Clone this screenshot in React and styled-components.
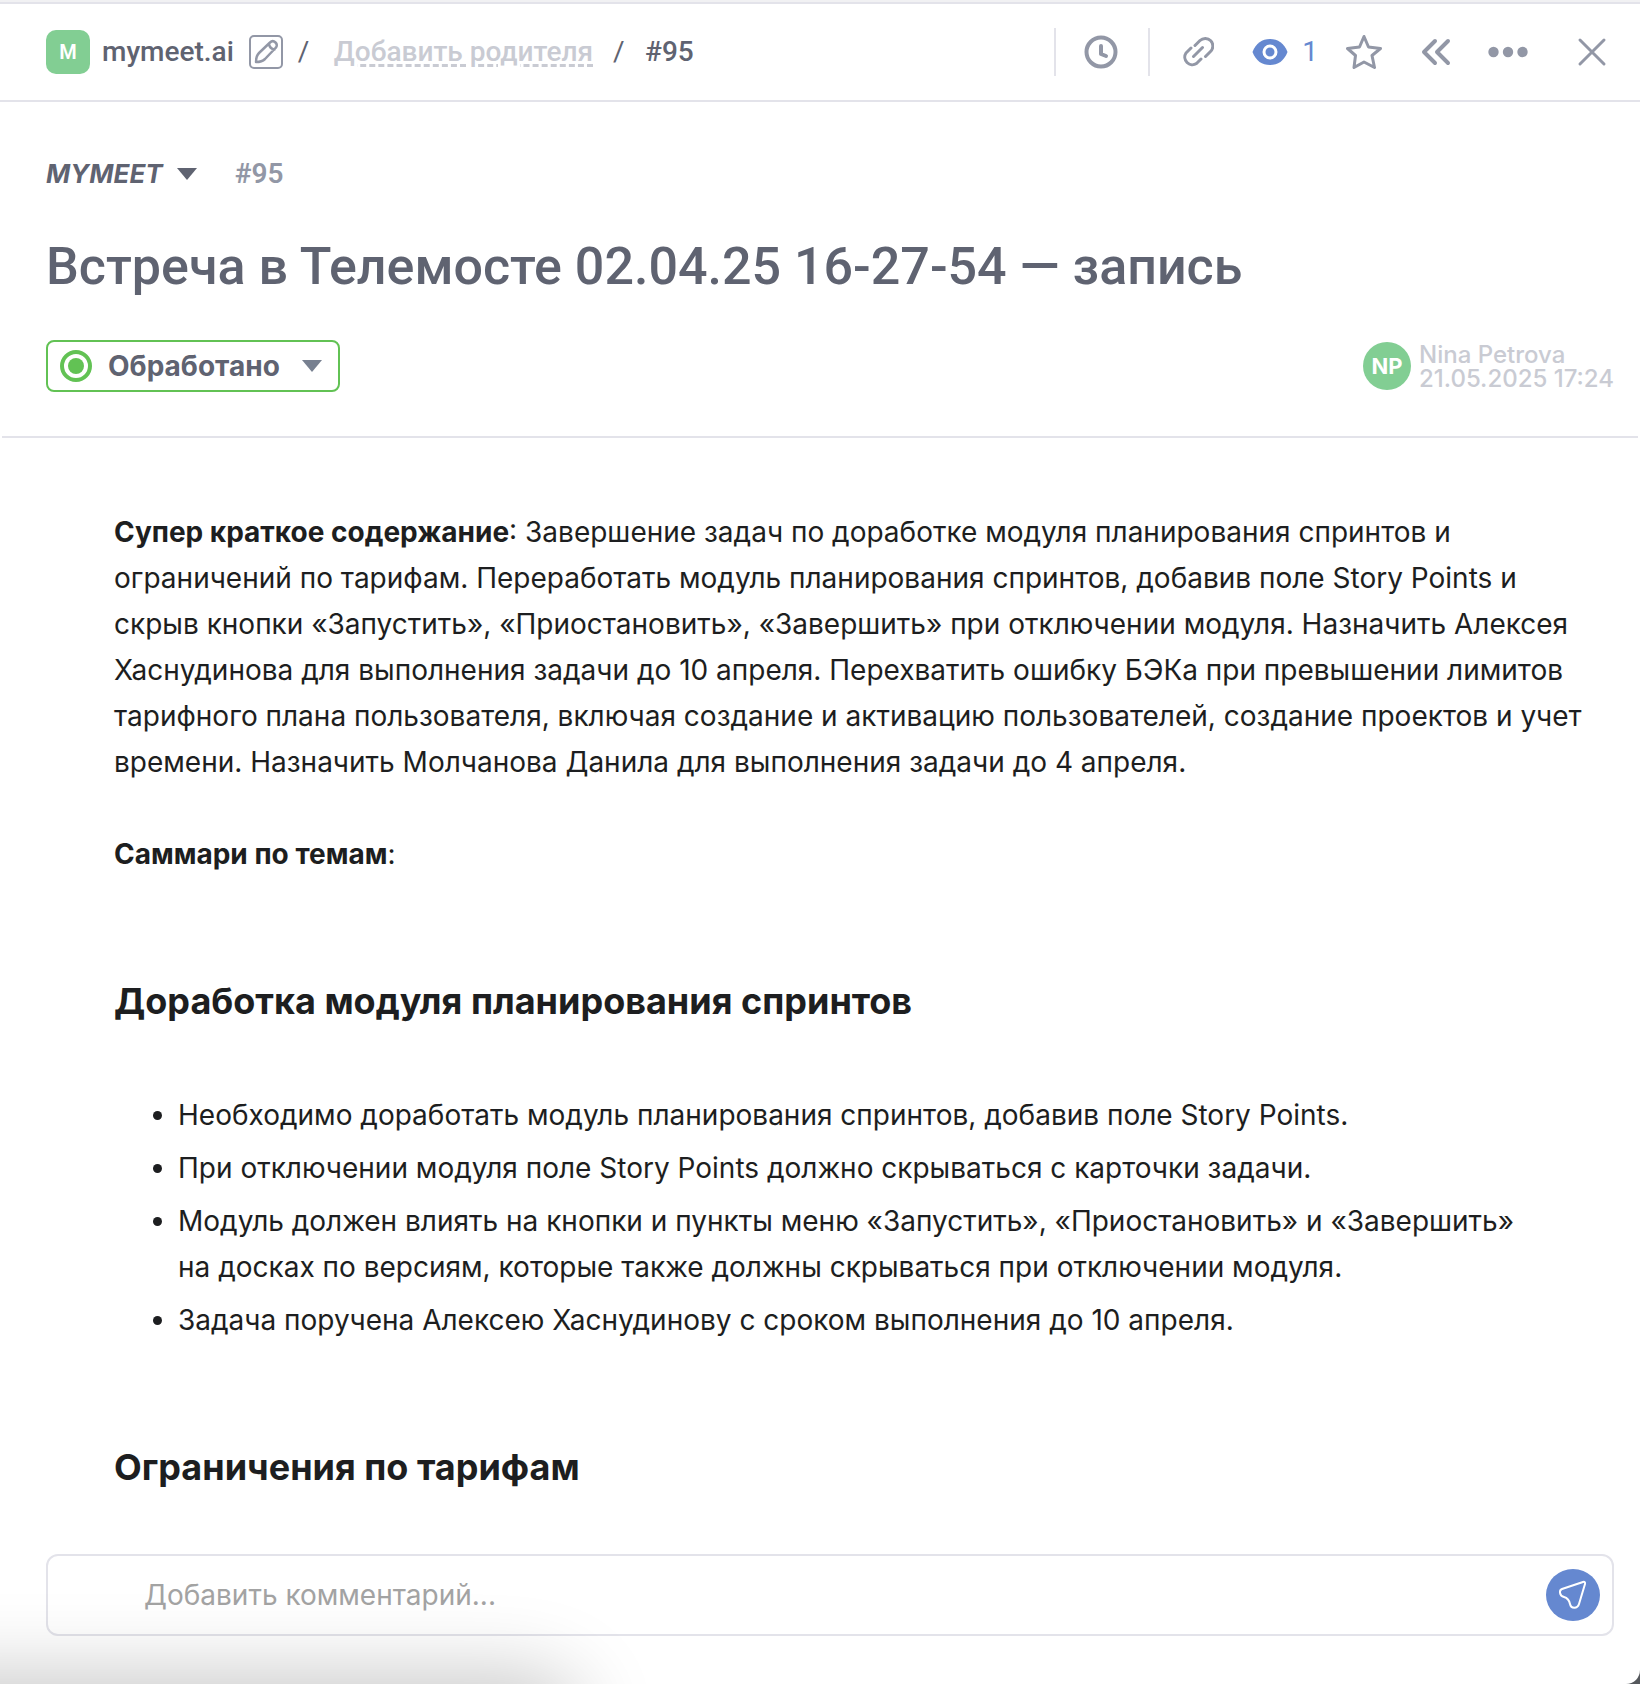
import React from 'react';
import styled, { createGlobalStyle } from 'styled-components';

const color = {
  text: '#1d1e20',
  slate: '#5f6371',
  muted: '#9297a6',
  faint: '#c9cbd3',
  line: '#e3e3ea',
  green: '#82ce93',
  status: '#62c254',
  blue: '#6588d0',
};

const ui = `Roboto, "Liberation Sans", sans-serif`;
const prose = `Inter, "Liberation Sans", sans-serif`;

const GlobalStyle = createGlobalStyle`
  *, *::before, *::after { box-sizing: border-box; }
  body { margin: 0; background: #55585c; color: ${color.text}; font-family: ${prose}; }
  button { margin: 0; padding: 0; border: 0; background: none; font: inherit; color: inherit; cursor: pointer; }
  h1, h2, p, ul { margin: 0; padding: 0; }
`;

const Panel = styled.main`
  position: relative;
  display: flex;
  flex-direction: column;
  height: 100vh;
  overflow: hidden;
  background: #fff;
  border-top: 2px solid #f1f1f3;
  border-bottom-right-radius: 14px;
`;

const Toolbar = styled.header`
  flex: none;
  display: flex;
  align-items: center;
  justify-content: space-between;
  height: 100px;
  padding: 0 32px 0 46px;
  border-top: 2px solid ${color.line};
  border-bottom: 2px solid ${color.line};
  font: 500 28px/36px ${ui};
  color: ${color.slate};
`;

const Crumbs = styled.nav`
  display: flex;
  align-items: center;
`;

const Badge = styled.span`
  display: grid;
  place-items: center;
  flex: none;
  width: ${(p) => p.$size}px;
  height: ${(p) => p.$size}px;
  border-radius: ${(p) => (p.$round ? '50%' : '10px')};
  background: ${color.green};
  color: #fff;
  font: ${(p) => (p.$round ? `700 22px/24px ${prose}` : `600 20px/24px ${ui}`)};
`;

const Project = styled.span`
  margin-left: 12px;
`;

const EditButton = styled.button`
  display: flex;
  margin-left: 15px;
  color: ${color.muted};
`;

const Slash = styled.span`
  width: 12px;
  margin-left: ${(p) => p.$gap}px;
  font-weight: 400;
`;

const ParentLink = styled.a`
  margin-left: 24px;
  color: ${color.faint};
  text-decoration: underline dashed 3px;
  text-underline-offset: 3px;
`;

const TaskRef = styled.span`
  margin-left: 20px;
`;

const Tools = styled.div`
  display: flex;
  align-items: center;
  color: ${color.muted};
`;

const Separator = styled.span`
  width: 2px;
  height: 48px;
  margin-left: ${(p) => p.$gap || 0}px;
  background: ${color.line};
`;

const Tool = styled.button`
  display: flex;
  align-items: center;
  gap: 14px;
  margin-left: ${(p) => p.$gap}px;
  color: ${(p) => (p.$active ? color.blue : 'inherit')};
  font-weight: 400;
`;

const TaskHead = styled.section`
  flex: none;
  margin: 0 2px;
  padding: 52px 24px 44px 44px;
  border-bottom: 2px solid ${color.line};
  color: ${color.slate};
`;

const KeyRow = styled.div`
  display: flex;
  align-items: center;
  height: 40px;
  font: 600 28px/40px ${ui};
`;

const Space = styled.button`
  display: flex;
  align-items: center;
  gap: 14px;
  font: italic 700 26px/40px ${prose};
`;

const Key = styled.span`
  margin-left: 38px;
  color: ${color.muted};
`;

const Title = styled.h1`
  margin-top: 41px;
  font: 500 52px/64px ${ui};
`;

const MetaRow = styled.div`
  display: flex;
  align-items: center;
  justify-content: space-between;
  margin-top: 41px;
`;

const Status = styled.button`
  display: flex;
  align-items: center;
  height: 52px;
  padding: 0 16px 0 12px;
  border: 2px solid ${color.status};
  border-radius: 8px;
  font: 700 28px/36px ${prose};
  svg:last-child { margin-left: 22px; }
`;

const StatusText = styled.span`
  margin-left: 16px;
`;

const Author = styled.div`
  display: flex;
  align-items: center;
  gap: 8px;
  color: ${color.faint};
  font: 500 24px/24px ${prose};
`;

const Stack = styled.div`
  display: flex;
  flex-direction: column;
  padding-top: 2px;
`;

const Body = styled.article`
  flex: 1;
  min-height: 0;
  overflow: hidden;
  padding: 71px 46px 0 114px;
  font: 400 28px/46px ${prose};
`;

const Paragraph = styled.p`
  & + & { margin-top: 46px; }
`;

const Heading = styled.h2`
  margin: 96px 0 63px;
  font: 700 36px/56px ${prose};
`;

const List = styled.ul`
  display: flex;
  flex-direction: column;
  gap: 7px;
  padding-left: 64px;
  padding-right: 48px;
`;

const Composer = styled.form`
  flex: none;
  display: flex;
  align-items: center;
  height: 82px;
  margin: 0 26px 48px 46px;
  padding: 0 12px 0 96px;
  border: 2px solid ${color.line};
  border-radius: 12px;
`;

const CommentInput = styled.input`
  flex: 1;
  min-width: 0;
  padding: 0;
  border: 0;
  outline: 0;
  background: none;
  color: ${color.text};
  font: 400 28px/40px ${prose};
  &::placeholder { color: #a3a3a3; opacity: 1; }
`;

const SendButton = styled.button`
  display: grid;
  place-items: center;
  width: 54px;
  height: 52px;
  border-radius: 50%;
  background: ${color.blue};
  color: #fff;
`;

const CornerShade = styled.div`
  position: absolute;
  left: -100px;
  bottom: -70px;
  width: 660px;
  height: 60px;
  border-radius: 30px;
  box-shadow: 0 0 80px 20px rgba(0, 0, 0, 0.22);
  pointer-events: none;
`;

const Caret = ({ fill = 'currentColor' }) => (
  <svg width="20" height="12" viewBox="0 0 20 12" aria-hidden="true">
    <path d="M0 0h20L10 12z" fill={fill} />
  </svg>
);

const Stroke = ({ w, h, sw = 3, children }) => (
  <svg width={w} height={h} viewBox={`0 0 ${w} ${h}`} fill="none" stroke="currentColor"
    strokeWidth={sw} strokeLinecap="round" strokeLinejoin="round" aria-hidden="true">
    {children}
  </svg>
);

const points = [
  'Необходимо доработать модуль планирования спринтов, добавив поле Story Points.',
  'При отключении модуля поле Story Points должно скрываться с карточки задачи.',
  'Модуль должен влиять на кнопки и пункты меню «Запустить», «Приостановить» и «Завершить» на досках по версиям, которые также должны скрываться при отключении модуля.',
  'Задача поручена Алексею Хаснудинову с сроком выполнения до 10 апреля.',
];

export default function App() {
  return (
    <>
      <GlobalStyle />
      <Panel>
        <Toolbar>
          <Crumbs>
            <Badge $size={44}>M</Badge>
            <Project>mymeet.ai</Project>
            <EditButton aria-label="Изменить проект">
              <Stroke w={34} h={34} sw={2}>
                <rect x="1" y="1" width="32" height="32" rx="4" />
                <path strokeWidth="2.500" d="M7 27c0-4 1-7 3-9L21 7.500c2-2 4-1.500 5.500 0s2 3.500 0 5.500L16 24c-2 2-5 3-9 3zM20 9c.5 3 2.500 5 5.500 5.500" />
              </Stroke>
            </EditButton>
            <Slash $gap={15}>/</Slash>
            <ParentLink href="#parent">Добавить родителя</ParentLink>
            <Slash $gap={20}>/</Slash>
            <TaskRef>#95</TaskRef>
          </Crumbs>
          <Tools>
            <Separator />
            <Tool $gap={28} aria-label="История">
              <Stroke w={34} h={34} sw={4}>
                <circle cx="17" cy="17" r="14.500" />
                <path d="M17 11v8l5 2" />
              </Stroke>
            </Tool>
            <Separator $gap={30} />
            <Tool $gap={32} aria-label="Скопировать ссылку">
              <Stroke w={32} h={32} sw={3}>
                <path d="M13 9.500l5-5a7.600 7.600 0 0 1 10.500 11l-5 5M19 23l-4.500 4.500A7.600 7.600 0 0 1 4 17l5-5M11.500 20.500l9-9" />
              </Stroke>
            </Tool>
            <Tool $gap={38} $active aria-label="Наблюдатели">
              <svg width="36" height="28" viewBox="0 0 36 28" aria-hidden="true">
                <path d="M.5 14C4 5 10 1 18 1s14 4 17.500 13C32 23 26 27 18 27S4 23 .5 14z" fill="currentColor" />
                <circle cx="18" cy="14" r="6" fill="currentColor" stroke="#fff" strokeWidth="3" />
              </svg>
              1
            </Tool>
            <Tool $gap={28} aria-label="В избранное">
              <Stroke w={36} h={36} sw={3}>
                <path d="M18 2.500l4.500 10.500 12 1.500-8.500 7 2.500 12L18 28l-10 5.500 1.500-12-8-7L13.500 13z" />
              </Stroke>
            </Tool>
            <Tool $gap={39} aria-label="Свернуть">
              <Stroke w={30} h={28} sw={4}>
                <path d="M14 3L3 14l11 11M27 3L16 14l11 11" />
              </Stroke>
            </Tool>
            <Tool $gap={37} aria-label="Ещё">
              <svg width="40" height="12" viewBox="0 0 40 12" fill="currentColor" aria-hidden="true">
                <circle cx="5.500" cy="6" r="5.200" />
                <circle cx="20" cy="6" r="5.200" />
                <circle cx="34.500" cy="6" r="5.200" />
              </svg>
            </Tool>
            <Tool $gap={48} aria-label="Закрыть">
              <Stroke w={32} h={32} sw={3}>
                <path d="M4 4l24 24M28 4L4 28" />
              </Stroke>
            </Tool>
          </Tools>
        </Toolbar>

        <TaskHead>
          <KeyRow>
            <Space>MYMEET <Caret /></Space>
            <Key>#95</Key>
          </KeyRow>
          <Title>Встреча в Телемосте 02.04.25 16-27-54 — запись</Title>
          <MetaRow>
            <Status>
              <svg width="32" height="32" viewBox="0 0 32 32" aria-hidden="true">
                <circle cx="16" cy="16" r="14" fill="none" stroke={color.status} strokeWidth="4" />
                <circle cx="16" cy="16" r="8" fill={color.status} />
              </svg>
              <StatusText>Обработано</StatusText>
              <Caret fill="#778090" />
            </Status>
            <Author>
              <Badge $size={48} $round>NP</Badge>
              <Stack>
                <span>Nina Petrova</span>
                <time dateTime="2025-05-21T17:24">21.05.2025 17:24</time>
              </Stack>
            </Author>
          </MetaRow>
        </TaskHead>

        <Body>
          <Paragraph>
            <b>Супер краткое содержание</b>: Завершение задач по доработке модуля планирования спринтов и
            ограничений по тарифам. Переработать модуль планирования спринтов, добавив поле Story Points и
            скрыв кнопки «Запустить», «Приостановить», «Завершить» при отключении модуля. Назначить Алексея
            Хаснудинова для выполнения задачи до 10 апреля. Перехватить ошибку БЭКа при превышении лимитов
            тарифного плана пользователя, включая создание и активацию пользователей, создание проектов и учет
            времени. Назначить Молчанова Данила для выполнения задачи до 4 апреля.
          </Paragraph>
          <Paragraph><b>Саммари по темам</b>:</Paragraph>
          <Heading>Доработка модуля планирования спринтов</Heading>
          <List>
            {points.map((text) => <li key={text}>{text}</li>)}
          </List>
          <Heading>Ограничения по тарифам</Heading>
        </Body>

        <Composer onSubmit={(e) => e.preventDefault()}>
          <CommentInput aria-label="Комментарий" placeholder="Добавить комментарий..." />
          <SendButton aria-label="Отправить">
            <Stroke w={30} h={30} sw={2}>
              <path d="M4 9L25 2c1.500-.5 2.500.5 2 2l-6 20c-1.500 5-8 5-9 0-.8-4-2.500-6-6-7-5-1.500-5-7-2-8z" />
            </Stroke>
          </SendButton>
        </Composer>
        <CornerShade />
      </Panel>
    </>
  );
}
